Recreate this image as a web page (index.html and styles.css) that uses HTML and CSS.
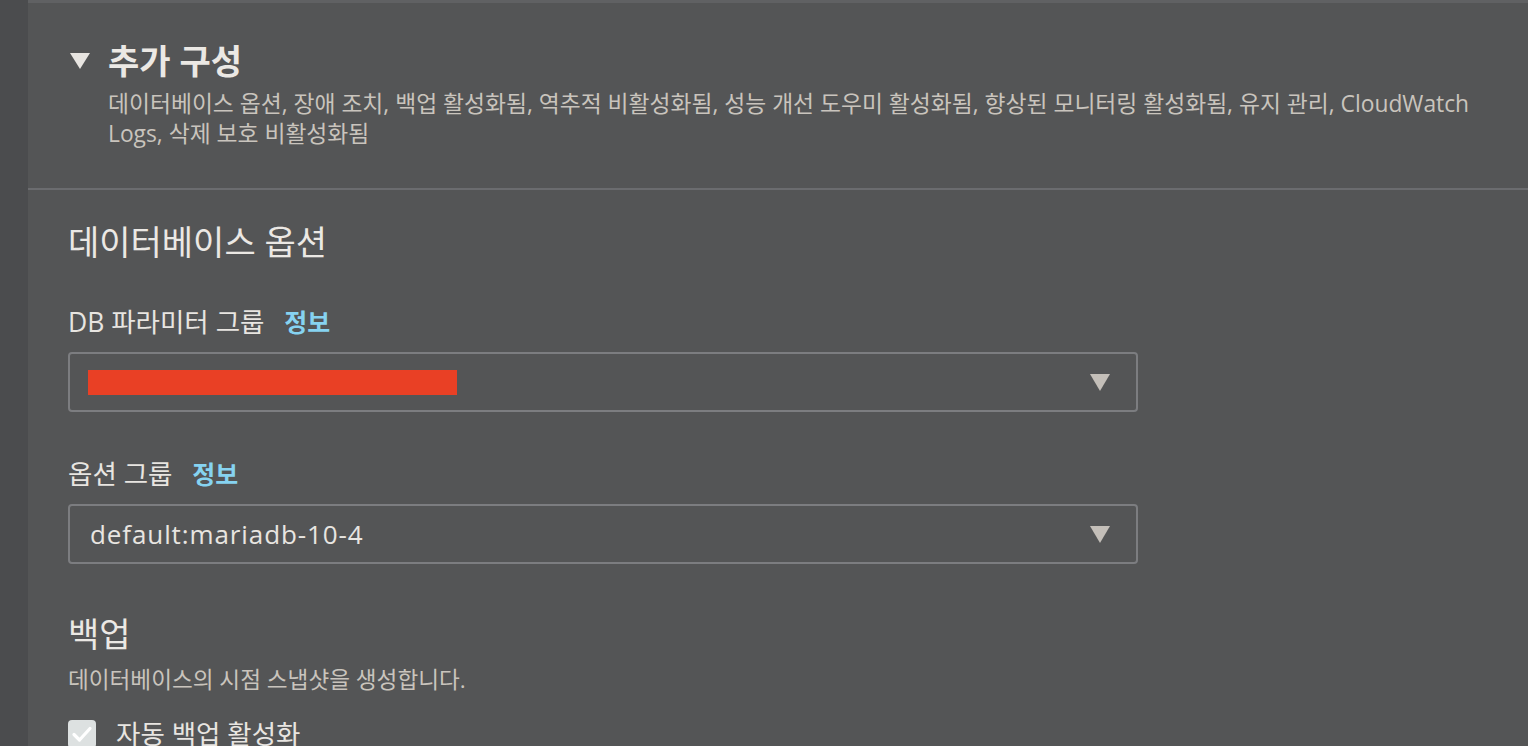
FILE: index.html
```html
<!DOCTYPE html>
<html lang="ko">
<head>
<meta charset="utf-8">
<link rel="stylesheet" href="styles.css">
</head>
<body>
<div class="page">
  <div class="rail"></div>
  <main class="main">
    <section class="expander">
      <div class="exp-head">
        <span class="caret"></span>
        <h2 class="exp-title">추가 구성</h2>
      </div>
      <p class="exp-desc">데이터베이스 옵션, 장애 조치, 백업 활성화됨, 역추적 비활성화됨, 성능 개선 도우미 활성화됨, 향상된 모니터링 활성화됨, 유지 관리, CloudWatch Logs, 삭제 보호 비활성화됨</p>
    </section>
    <section class="content">
      <h3 class="sec-title">데이터베이스 옵션</h3>
      <div class="field">
        <div class="label">DB 파라미터 그룹 <a class="info">정보</a></div>
        <div class="select">
          <span class="redact"></span>
          <span class="arrow"></span>
        </div>
      </div>
      <div class="field field2">
        <div class="label">옵션 그룹 <a class="info">정보</a></div>
        <div class="select">
          <span class="value">default:mariadb-10-4</span>
          <span class="arrow"></span>
        </div>
      </div>
      <h3 class="sec-title backup">백업</h3>
      <p class="sec-desc">데이터베이스의 시점 스냅샷을 생성합니다.</p>
      <label class="check">
        <span class="box"><svg width="28" height="28" viewBox="0 0 28 28"><path d="M6 14.5 L11.5 20 L22 8.5" fill="none" stroke="#ffffff" stroke-width="3.2" stroke-linecap="round" stroke-linejoin="round"/></svg></span>
        <span class="check-text">자동 백업 활성화</span>
      </label>
    </section>
  </main>
</div>
</body>
</html>
```

FILE: styles.css
```css
* { box-sizing: border-box; }
html, body {
  margin: 0;
  padding: 0;
  height: 100%;
  background: #545556;
  overflow: hidden;
}
body {
  font-family: "Open Sans", "Noto Sans CJK KR", sans-serif;
  color: #e8e5e1;
}
.page {
  display: flex;
  min-height: 746px;
}
.rail {
  width: 28px;
  flex: none;
  background: #4b4c4e;
}
.main {
  flex: 1;
  border-top: 3px solid #606163;
}
.expander {
  padding: 37px 40px 0 40px;
  height: 187px;
  border-bottom: 2px solid #6b6c6f;
}
.exp-head {
  display: flex;
  align-items: center;
  gap: 18px;
}
.caret {
  width: 0;
  height: 0;
  border-left: 10px solid transparent;
  border-right: 10px solid transparent;
  border-top: 16px solid #e8e5e1;
  margin-left: 2px;
}
.exp-title {
  margin: 0;
  font-size: 34px;
  font-weight: 700;
  line-height: 42px;
  color: #ebe8e4;
}
.exp-desc {
  margin: 7px 0 0 40px;
  font-size: 22.8px;
  line-height: 30px;
  color: #c9c4bd;
  max-width: 1390px;
}
.content {
  padding: 0 40px;
}
.sec-title {
  margin: 0;
  padding-top: 30px;
  font-size: 34px;
  font-weight: 400;
  line-height: 44px;
  color: #ebe8e4;
}
.field {
  margin-top: 43px;
}
.field2 {
  margin-top: 47px;
}
.label {
  font-size: 26.5px;
  line-height: 30px;
  color: #e8e5e1;
}
.info {
  margin-left: 13px;
  color: #86d3f1;
  font-weight: 700;
  font-size: 25px;
}
.select {
  margin-top: 15px;
  width: 1070px;
  height: 60px;
  border: 2px solid #7c7d80;
  border-radius: 4px;
  display: flex;
  align-items: center;
  padding: 0 20px;
}
.redact {
  width: 369px;
  height: 25px;
  margin-left: -2px;
  background: #e94025;
}
.value {
  font-size: 26px;
  letter-spacing: 0.9px;
  color: #e8e5e1;
}
.arrow {
  margin-left: auto;
  margin-right: 6px;
  width: 0;
  height: 0;
  border-left: 10px solid transparent;
  border-right: 10px solid transparent;
  border-top: 17px solid #c4bfb9;
}
.backup {
  padding-top: 48px;
}
.sec-desc {
  margin: 9px 0 0 0;
  font-size: 22.6px;
  line-height: 30px;
  color: #c9c4bd;
}
.check {
  margin-top: 21px;
  display: flex;
  align-items: center;
  gap: 20px;
}
.box {
  width: 28px;
  height: 28px;
  border-radius: 4px;
  background: #dde1e1;
  display: flex;
}
.check-text {
  font-size: 26.5px;
  line-height: 36px;
  color: #e8e5e1;
}
```
